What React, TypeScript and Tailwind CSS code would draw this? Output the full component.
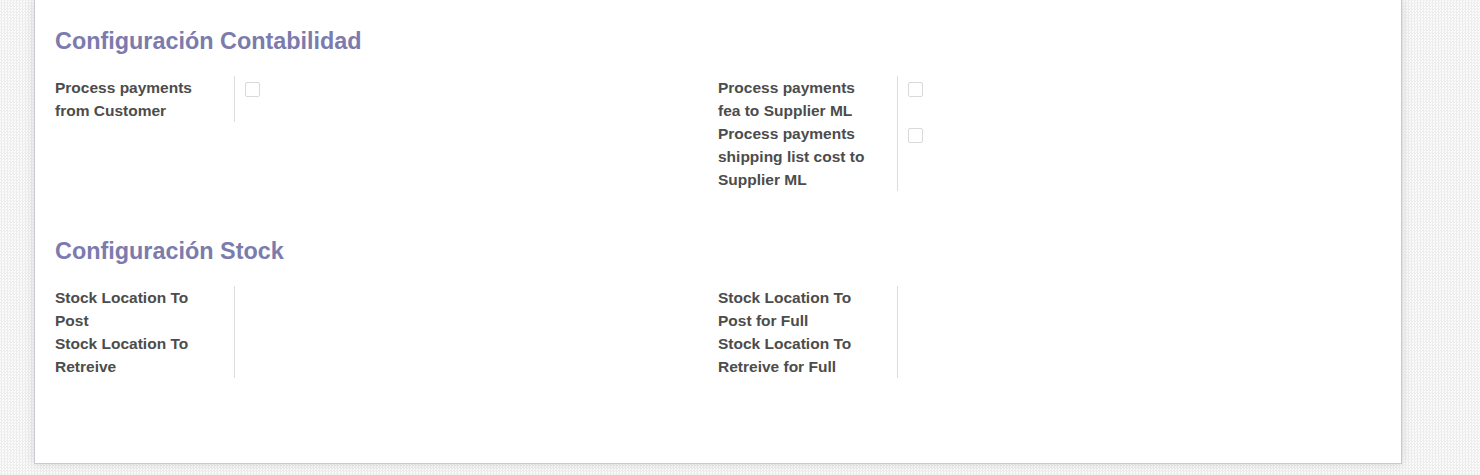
import React from 'react';

type Field = { label: string; checkbox?: boolean };

const accounting: { left: Field[]; right: Field[] } = {
  left: [{ label: 'Process payments from Customer', checkbox: true }],
  right: [
    { label: 'Process payments fea to Supplier ML', checkbox: true },
    { label: 'Process payments shipping list cost to Supplier ML', checkbox: true },
  ],
};

const stock: { left: Field[]; right: Field[] } = {
  left: [{ label: 'Stock Location To Post' }, { label: 'Stock Location To Retreive' }],
  right: [{ label: 'Stock Location To Post for Full' }, { label: 'Stock Location To Retreive for Full' }],
};

function Group({ fields }: { fields: Field[] }) {
  return (
    <div className="w-1/2">
      {fields.map((f) => (
        <div key={f.label} className="flex">
          <div className="w-[180px] shrink-0 border-r border-[#dddddd] pr-[18px] font-bold text-[#4c4c4c]">
            {f.label}
          </div>
          <div className="pl-[10px] pt-[6px]">
            {f.checkbox && (
              <div className="h-[15px] w-[15px] rounded-[2px] border border-[#d9d9d9] bg-white" />
            )}
          </div>
        </div>
      ))}
    </div>
  );
}

function Section({ title, data, className }: { title: string; data: { left: Field[]; right: Field[] }; className?: string }) {
  return (
    <div className={className}>
      <h2 className="text-[23.4px] font-bold leading-[28px] text-[#7c7bad]">{title}</h2>
      <div className="mt-[21px] flex">
        <Group fields={data.left} />
        <Group fields={data.right} />
      </div>
    </div>
  );
}

export default function App() {
  return (
    <div
      className="min-h-[475px] bg-[#f7f7f7] bg-[repeating-conic-gradient(#ededed_0%_25%,#fbfbfb_0%_50%)] bg-[length:3px_3px] pl-[34px] pr-[78px]"
      style={{ fontFamily: '"Liberation Sans", Arial, sans-serif' }}
    >
      <div className="h-[464px] border-x border-b border-[#c9c9d1] bg-white px-5 pt-[27px] text-[15.5px] leading-[23px] shadow-[0_0_10px_rgba(0,0,0,0.12)]">
        <Section title="Configuración Contabilidad" data={accounting} />
        <Section title="Configuración Stock" data={stock} className="mt-[46px]" />
      </div>
    </div>
  );
}
